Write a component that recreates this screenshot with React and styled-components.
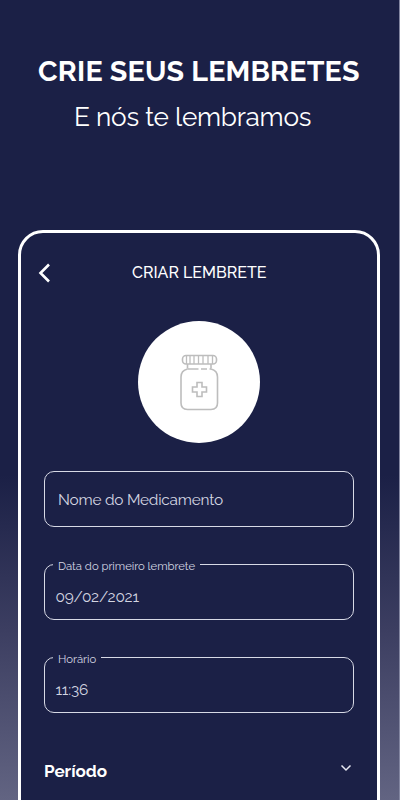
import React from "react";
import styled, { createGlobalStyle } from "styled-components";

const GlobalStyle = createGlobalStyle`
  *{
    box-sizing:border-box;
  }
  body{
    margin:0;
    background:#1b2046;
    font-family:Raleway, Lato, sans-serif;
    color:#fff;
  }
`;

const Page = styled.main`
  width:400px;
  height:800px;
  overflow:hidden;
  padding:52px 19px 0 18px;
  border-right:1px solid #8386a1;
  background:linear-gradient(#1b2046 0, #1b2046 475px, #3c3e61 630px, #626482 800px);
`;

const Title = styled.h1`
  margin:0;
  height:36px;
  padding-left:20px;
  font-size:28.6px;
  line-height:38px;
  font-weight:700;
  letter-spacing:${props => props.$track};
  white-space:nowrap;
`;

const Subtitle = styled.p`
  margin:11px 0 0;
  height:36px;
  padding-left:56px;
  font-size:26.2px;
  line-height:36px;
  font-weight:400;
  letter-spacing:${props => props.$track};
  white-space:nowrap;
`;

const Phone = styled.section`
  height:620px;
  margin-top:95px;
  padding:0 23px;
  border:3px solid #fff;
  border-radius:25px;
  background:#1b2046;
`;

const TopBar = styled.header`
  display:flex;
  align-items:center;
  height:79px;
  svg{
    margin:0 0 0 -7px;
  }
  h2{
    margin:0 0 0 81px;
    font-size:16px;
    font-weight:500;
    letter-spacing:${props => props.$track};
    white-space:nowrap;
  }
`;

const Avatar = styled.div`
  display:flex;
  align-items:center;
  justify-content:center;
  width:122px;
  height:122px;
  margin:9px 0 28px 93.5px;
  border-radius:50%;
  background:#fff;
`;

const Field = styled.div`
  display:flex;
  align-items:center;
  height:56px;
  margin-bottom:30px;
  padding:1px 0 0 13px;
  border:1px solid #d7d9e5;
  border-radius:10px;
  color:#d3d5e1;
  font-size:15.4px;
  letter-spacing:${props => props.$track};
`;

const Fieldset = styled.fieldset`
  height:63px;
  margin:0 0 30px;
  padding:0 0 0 9px;
  border:1px solid #d7d9e5;
  border-radius:10px;
  color:#d3d5e1;
  legend{
    height:14px;
    margin-left:-1px;
    padding:0 5px;
    font-size:11.3px;
    line-height:19px;
    letter-spacing:${props => props.$track};
  }
`;

const Value = styled.div`
  padding-top:16px;
  padding-left:1.5px;
  font-size:15.4px;
  line-height:20px;
  letter-spacing:${props => props.$track};
`;

const Period = styled.div`
  display:flex;
  align-items:center;
  justify-content:space-between;
  height:24px;
  margin-top:46px;
  font-size:17px;
  font-weight:700;
  letter-spacing:${props => props.$track};
  svg{
    margin:-6px 2px 0 0;
  }
`;

function BackIcon() {
  return (
    <svg width="14" height="22" viewBox="0 0 14 22" fill="none" stroke="#fff" strokeWidth="2.6">
      <path d="M12 2.500L3.500 11L12 19.500" />
    </svg>
  );
}

function DownIcon() {
  return (
    <svg width="12" height="8" viewBox="0 0 12 8" fill="none" stroke="#e8e9f2" strokeWidth="1.5">
      <path d="M1.5 1.500L6 6L10.500 1.500" />
    </svg>
  );
}

function BottleIcon() {
  return (
    <svg width="40" height="58" viewBox="0 0 40 58" fill="none" stroke="#bdbdbd" strokeWidth="1.6">
      <rect x="3.500" y="2.500" width="34" height="8.500" rx="3.500" />
      <path d="M7.500 2.500v8.500M11 2.500v8.500M15 2.500v8.500M19.500 2.500v8.500M24 2.500v8.500M29 2.500v8.500M33.500 2.500v8.500" strokeWidth="1.3" />
      <path d="M8.500 11v4.500M32 11v4.500M8.500 16h11M22 16h6M30.500 16h1.500" />
      <path d="M8.500 16q-6.500 1.500 -6.500 8v26q0 6.500 6.500 6.500h23.500q6.500 0 6.500-6.500v-26q0-6.500-6.500-8" />
      <path d="M18 29.500h5v4.500h4.500v5h-4.500v4.500h-5v-4.500h-4.500v-5h4.500z" />
    </svg>
  );
}

function App() {
  return (
    <>
      <GlobalStyle />
      <Page>
        <Title $track="0.19px">CRIE SEUS LEMBRETES</Title>
        <Subtitle $track="-0.26px">E nós te lembramos</Subtitle>
        <Phone>
          <TopBar $track="0px">
            <BackIcon />
            <h2>CRIAR LEMBRETE</h2>
          </TopBar>
          <Avatar>
            <BottleIcon />
          </Avatar>
          <Field $track="-0.22px">Nome do Medicamento</Field>
          <Fieldset $track="-0.02px">
            <legend>Data do primeiro lembrete</legend>
            <Value $track="-0.22px">09/02/2021</Value>
          </Fieldset>
          <Fieldset $track="0px">
            <legend>Horário</legend>
            <Value $track="-0.22px">11:36</Value>
          </Fieldset>
          <Period $track="0px">
            <span>Período</span>
            <DownIcon />
          </Period>
        </Phone>
      </Page>
    </>
  );
}

export default App;
